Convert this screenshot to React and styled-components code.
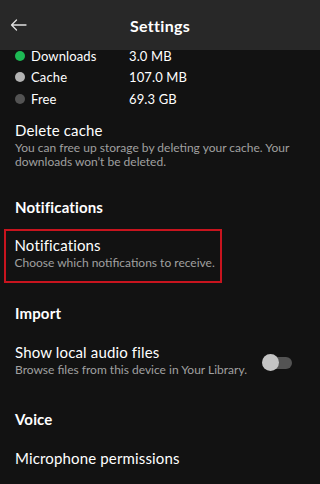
import React, { useState } from "react";
import styled, { createGlobalStyle } from "styled-components";

const GlobalStyle = createGlobalStyle`
  html, body {
    margin: 0;
    padding: 0;
    background: #121212;
  }
  * {
    box-sizing: border-box;
  }
`;

const Screen = styled.div`
  width: 320px;
  height: 484px;
  overflow: hidden;
  background: #121212;
  font-family: "Lato", "Liberation Sans", sans-serif;
  color: #ffffff;
  display: flex;
  flex-direction: column;
`;

const Header = styled.div`
  position: relative;
  z-index: 2;
  flex: 0 0 50px;
  height: 50px;
  background: #282828;
  display: flex;
  align-items: center;
  justify-content: center;
`;

const BackButton = styled.button`
  position: absolute;
  left: 8px;
  top: 15px;
  width: 20px;
  height: 20px;
  padding: 0;
  border: none;
  background: none;
  color: #e0e0e0;
  display: flex;
  align-items: center;
  justify-content: center;
`;

const Title = styled.div`
  font-size: 16px;
  font-weight: 700;
  letter-spacing: 0.02em;
`;

const Content = styled.div`
  padding: 0 15px;
  display: flex;
  flex-direction: column;
`;

const Legend = styled.div`
  margin-top: -5px;
  display: flex;
  flex-direction: column;
`;

const LegendRow = styled.div`
  height: 21.5px;
  display: grid;
  grid-template-columns: 16px 98px 1fr;
  align-items: center;
  font-size: 13px;
  letter-spacing: 0.01em;
`;

const Dot = styled.span`
  width: 10px;
  height: 10px;
  border-radius: 50%;
  background: ${(p) => p.$color};
`;

const Item = styled.div`
  display: flex;
  align-items: center;
  justify-content: space-between;
  margin-top: ${(p) => p.$top || 0}px;
`;

const ItemText = styled.div`
  display: flex;
  flex-direction: column;
`;

const ItemTitle = styled.div`
  font-size: 15px;
  line-height: 20px;
  letter-spacing: 0.01em;
`;

const ItemDesc = styled.div`
  font-size: 12px;
  line-height: 14px;
  color: #a0a0a0;
  margin-top: 1px;
  white-space: nowrap;
`;

const SectionTitle = styled.div`
  font-size: 15px;
  font-weight: 700;
  line-height: 20px;
  letter-spacing: 0.01em;
  margin-top: ${(p) => p.$top}px;
`;

const Highlight = styled.div`
  margin: 12px 0 0 -11px;
  width: 218px;
  border: 2.5px solid #c8141e;
  padding: 4px 8px 11px 8.5px;
`;

const Toggle = styled.button`
  position: relative;
  width: 30px;
  height: 18px;
  margin-right: 13px;
  margin-top: 8px;
  padding: 0;
  border: none;
  background: none;

  &::before {
    content: "";
    position: absolute;
    left: 2px;
    right: 0;
    top: 3px;
    height: 12px;
    border-radius: 6px;
    background: #535353;
  }

  &::after {
    content: "";
    position: absolute;
    left: 0;
    top: 0;
    width: 17px;
    height: 17px;
    border-radius: 50%;
    background: #c4c4c4;
  }
`;

const legend = [
  { label: "Downloads", value: "3.0 MB", color: "#1db954" },
  { label: "Cache", value: "107.0 MB", color: "#b3b3b3" },
  { label: "Free", value: "69.3 GB", color: "#535353" },
];

export default function App() {
  const [localFiles, setLocalFiles] = useState(false);

  return (
    <Screen>
      <GlobalStyle />
      <Header>
        <BackButton aria-label="Back">
          <svg width="17" height="12" viewBox="0 0 17 12" fill="none">
            <path
              d="M16 6H1.5M6.5 1L1.5 6l5 5"
              stroke="currentColor"
              strokeWidth="1.3"
              strokeLinecap="round"
              strokeLinejoin="round"
            />
          </svg>
        </BackButton>
        <Title>Settings</Title>
      </Header>

      <Content>
        <Legend>
          {legend.map((row) => (
            <LegendRow key={row.label}>
              <Dot $color={row.color} />
              <span>{row.label}</span>
              <span>{row.value}</span>
            </LegendRow>
          ))}
        </Legend>

        <Item $top={10}>
          <ItemText>
            <ItemTitle>Delete cache</ItemTitle>
            <ItemDesc>
              You can free up storage by deleting your cache. Your
              <br />
              downloads won’t be deleted.
            </ItemDesc>
          </ItemText>
        </Item>

        <SectionTitle $top={28}>Notifications</SectionTitle>

        <Highlight>
          <ItemText>
            <ItemTitle>Notifications</ItemTitle>
            <ItemDesc>Choose which notifications to receive.</ItemDesc>
          </ItemText>
        </Highlight>

        <SectionTitle $top={20}>Import</SectionTitle>

        <Item $top={19}>
          <ItemText>
            <ItemTitle>Show local audio files</ItemTitle>
            <ItemDesc>Browse files from this device in Your Library.</ItemDesc>
          </ItemText>
          <Toggle
            aria-label="Show local audio files"
            aria-pressed={localFiles}
            onClick={() => setLocalFiles(!localFiles)}
          />
        </Item>

        <SectionTitle $top={32}>Voice</SectionTitle>

        <Item $top={19}>
          <ItemTitle>Microphone permissions</ItemTitle>
        </Item>
      </Content>
    </Screen>
  );
}
